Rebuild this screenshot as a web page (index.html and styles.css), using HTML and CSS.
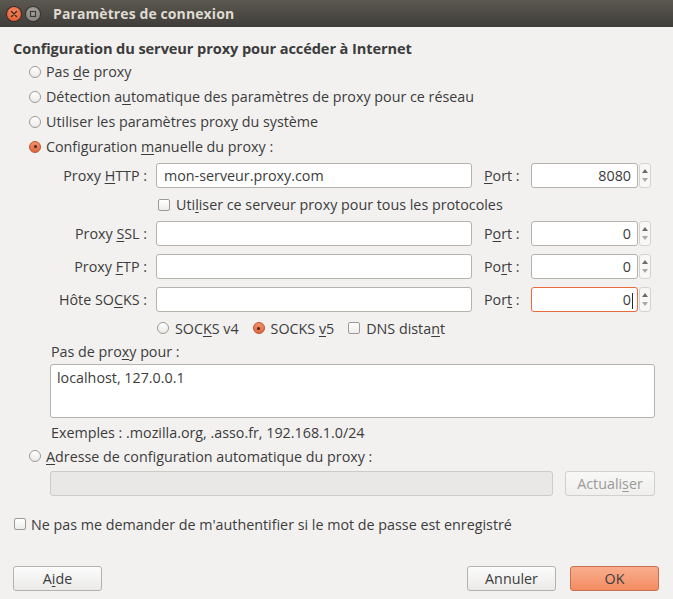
FILE: index.html
```html
<!DOCTYPE html>
<html lang="fr">
<head>
<meta charset="utf-8">
<title>Paramètres de connexion</title>
<link rel="stylesheet" href="styles.css">
</head>
<body>
<div class="window">
  <div class="titlebar">
    <span class="wbtn close">
      <svg width="8" height="8" viewBox="0 0 8 8"><path d="M1.5 1.5L6.5 6.5M6.5 1.5L1.5 6.5" stroke="#3a2a22" stroke-width="1.4" stroke-linecap="round"/></svg>
    </span>
    <span class="wbtn min">
      <svg width="8" height="8" viewBox="0 0 8 8"><rect x="1.5" y="1.5" width="5" height="5" fill="none" stroke="#3c3b37" stroke-width="1.2"/></svg>
    </span>
    <span class="title">Paramètres de connexion</span>
  </div>

  <div class="content">
    <div class="heading">Configuration du serveur proxy pour accéder à Internet</div>

    <div class="options">
      <div class="opt"><span class="radio"></span><span>Pas <u>d</u>e proxy</span></div>
      <div class="opt"><span class="radio"></span><span>Détection a<u>u</u>tomatique des paramètres de proxy pour ce réseau</span></div>
      <div class="opt"><span class="radio"></span><span>Utiliser les paramètres prox<u>y</u> du système</span></div>
      <div class="opt"><span class="radio checked"></span><span>Configuration <u>m</u>anuelle du proxy :</span></div>
    </div>

    <div class="manual">
      <div class="grid">
        <div class="lbl">Proxy <u>H</u>TTP :</div>
        <div class="field">mon-serveur.proxy.com</div>
        <div class="plbl"><u>P</u>ort :</div>
        <div class="spin"><div class="spinfield">8080</div><div class="arrows"><span class="up"></span><span class="down"></span></div></div>

        <div class="allproto"><span class="check"></span><span>Uti<u>l</u>iser ce serveur proxy pour tous les protocoles</span></div>

        <div class="lbl">Proxy <u>S</u>SL :</div>
        <div class="field"></div>
        <div class="plbl">P<u>o</u>rt :</div>
        <div class="spin"><div class="spinfield">0</div><div class="arrows"><span class="up"></span><span class="down"></span></div></div>

        <div class="lbl">Proxy <u>F</u>TP :</div>
        <div class="field"></div>
        <div class="plbl">Po<u>r</u>t :</div>
        <div class="spin"><div class="spinfield">0</div><div class="arrows"><span class="up"></span><span class="down"></span></div></div>

        <div class="lbl">Hôte SO<u>C</u>KS :</div>
        <div class="field"></div>
        <div class="plbl">Por<u>t</u> :</div>
        <div class="spin"><div class="spinfield focus">0<span class="caret"></span></div><div class="arrows"><span class="up"></span><span class="down"></span></div></div>
      </div>

      <div class="socks">
        <span class="item"><span class="radio"></span><span>SOC<u>K</u>S v4</span></span>
        <span class="item"><span class="radio checked"></span><span>SOCKS <u>v</u>5</span></span>
        <span class="item"><span class="check"></span><span>DNS dista<u>n</u>t</span></span>
      </div>

      <div class="noproxy">Pas de pro<u>x</u>y pour :</div>
      <div class="textarea">localhost, 127.0.0.1</div>
      <div class="examples">Exemples : .mozilla.org, .asso.fr, 192.168.1.0/24</div>
    </div>

    <div class="opt auto"><span class="radio"></span><span><u>A</u>dresse de configuration automatique du proxy :</span></div>
    <div class="autorow">
      <div class="field disabled"></div>
      <div class="btn disabled">Actuali<u>s</u>er</div>
    </div>

    <div class="noauth"><span class="check"></span><span>Ne pas me demander de m'authentifier si le mot de passe est enregistré</span></div>

    <div class="buttons">
      <div class="btn wide">A<u>i</u>de</div>
      <div class="spacer"></div>
      <div class="btn wide">Annuler</div>
      <div class="btn wide ok">OK</div>
    </div>
  </div>
</div>
</body>
</html>
```

FILE: styles.css
```css
* { box-sizing: border-box; }
html, body { margin: 0; padding: 0; }
body {
  width: 673px;
  height: 599px;
  overflow: hidden;
  background: #f2f1f0;
  font-family: "Open Sans", "Noto Sans", "DejaVu Sans", sans-serif;
  font-size: 14.3px;
  color: #3c3c3c;
}
u { text-decoration: underline; text-underline-offset: 2px; text-decoration-thickness: 1px; }

.window { width: 673px; height: 599px; }

.titlebar {
  height: 27px;
  background: linear-gradient(#5b5851, #3f3d38);
  display: flex;
  align-items: center;
  padding-left: 7px;
}
.wbtn {
  width: 14px;
  height: 14px;
  border-radius: 50%;
  display: flex;
  align-items: center;
  justify-content: center;
  margin-right: 5px;
}
.wbtn.close { background: radial-gradient(circle at 50% 35%, #f58a5f, #e2522a); box-shadow: 0 0 0 1px #3a2a22; }
.wbtn.min { background: radial-gradient(circle at 50% 35%, #a7a49d, #7f7d77); box-shadow: 0 0 0 1px #34332f; }
.title {
  margin-left: 8px;
  color: #dfdbd2;
  font-weight: bold;
  font-size: 14px;
  letter-spacing: 0.1px;
}

.content { padding: 11px 14px 0 13px; }

.heading {
  font-weight: bold;
  font-size: 14.6px;
  height: 21px;
  line-height: 21px;
  letter-spacing: -0.1px;
}

.opt {
  height: 25px;
  display: flex;
  align-items: center;
  padding-left: 16px;
}
.opt .radio { margin-right: 5px; }

.radio {
  width: 12px;
  height: 12px;
  border-radius: 50%;
  border: 1px solid #9d9a95;
  background: linear-gradient(#ffffff, #ecebea);
  display: inline-block;
  flex: none;
  position: relative;
}
.radio.checked {
  border-color: #b9542f;
  background: linear-gradient(#f3916a, #e0683f);
}
.radio.checked::after {
  content: "";
  position: absolute;
  left: 3.5px;
  top: 3.5px;
  width: 3px;
  height: 3px;
  border-radius: 50%;
  background: #4a2418;
}
.check {
  width: 12px;
  height: 12px;
  border-radius: 2px;
  border: 1px solid #9d9a95;
  background: linear-gradient(#ffffff, #eeedec);
  display: inline-block;
  flex: none;
}

.manual { padding-left: 37px; }

.grid {
  margin-top: 4px;
  display: grid;
  grid-template-columns: 106px 316px 59px 120px;
  row-gap: 8px;
  grid-template-rows: 25px 17px 25px 25px 25px;
  align-items: center;
}
.lbl { text-align: right; padding-right: 9px; white-space: nowrap; }
.plbl { padding-left: 12px; white-space: nowrap; }

.field {
  height: 25px;
  background: #ffffff;
  border: 1px solid #b6b2ad;
  border-radius: 3px;
  padding: 0 7px;
  line-height: 23px;
  white-space: nowrap;
}
.field.disabled { background: #e9e8e7; border-color: #cdcbc8; }

.spin { display: flex; height: 25px; }
.spinfield {
  width: 107px;
  height: 25px;
  background: #fff;
  border: 1px solid #b6b2ad;
  border-radius: 3px;
  text-align: right;
  padding-right: 6px;
  line-height: 23px;
}
.spinfield.focus { border-color: #e86b3f; }
.caret {
  display: inline-block;
  width: 1px;
  height: 16px;
  background: #2a2a2a;
  vertical-align: middle;
  margin-left: 1px;
  margin-right: -2px;
}
.arrows {
  width: 12px;
  height: 25px;
  margin-left: 1px;
  border: 1px solid #d6d3cf;
  border-radius: 3px;
  background: #f7f7f6;
  display: flex;
  flex-direction: column;
  align-items: center;
  justify-content: space-between;
  padding: 5px 0;
}
.up, .down { width: 0; height: 0; border-left: 3px solid transparent; border-right: 3px solid transparent; }
.up { border-bottom: 4px solid #6d6b68; }
.down { border-top: 4px solid #a9a7a4; }

.allproto {
  grid-column: 2 / 5;
  display: flex;
  align-items: center;
  padding-left: 2px;
  white-space: nowrap;
}
.allproto .check { margin-right: 6px; }

.socks {
  margin-top: 4px;
  height: 24px;
  padding-left: 107px;
  display: flex;
  align-items: center;
}
.socks .item { display: flex; align-items: center; margin-right: 14px; white-space: nowrap; }
.socks .radio, .socks .check { margin-right: 6px; }

.noproxy { margin-top: 2px; height: 20px; line-height: 20px; padding-left: 1px; }
.textarea {
  margin-top: 2px;
  width: 605px;
  height: 54px;
  background: #fff;
  border: 1px solid #b6b2ad;
  border-radius: 3px;
  padding: 3px 6px;
  line-height: 20px;
}
.examples { margin-top: 5px; height: 20px; line-height: 20px; padding-left: 1px; }

.opt.auto { margin-top: 3px; height: 20px; }

.autorow {
  margin-top: 5px;
  padding-left: 37px;
  display: flex;
  gap: 12px;
}
.autorow .field { width: 503px; }

.btn {
  height: 25px;
  border: 1px solid #b5b2ad;
  border-radius: 3px;
  background: linear-gradient(#fcfcfc, #ebeae9);
  display: flex;
  align-items: center;
  justify-content: center;
  padding: 0 8px;
  white-space: nowrap;
}
.btn.disabled { width: 90px; color: #9b9a98; border-color: #d2d0cd; background: linear-gradient(#f8f8f7, #f0efee); }
.btn.wide { width: 89px; }
.btn.ok {
  background: linear-gradient(#f9ae8e, #f48c62);
  border-color: #c6704d;
  margin-left: 14px;
}

.noauth {
  margin-top: 18px;
  height: 20px;
  display: flex;
  align-items: center;
  padding-left: 1px;
  white-space: nowrap;
}
.noauth .check { margin-right: 5px; }

.buttons {
  margin-top: 32px;
  display: flex;
}
.spacer { flex: 1; }
```
